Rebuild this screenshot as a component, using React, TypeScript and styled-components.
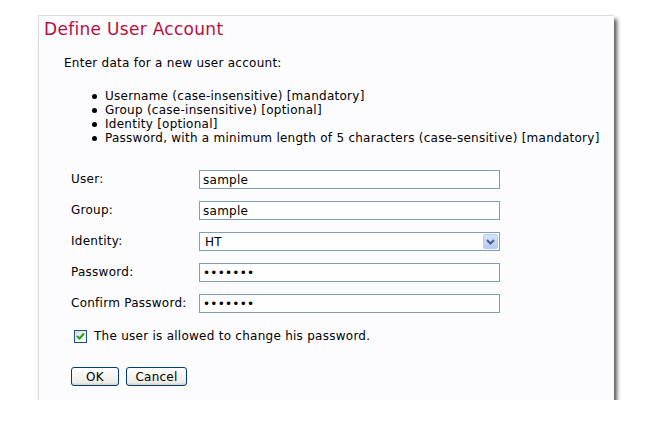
import React from "react";
import styled, { createGlobalStyle } from "styled-components";

const GlobalStyle = createGlobalStyle`
  body {
    margin: 0;
    background: #fff;
    font-family: "DejaVu Sans", Verdana, sans-serif;
  }
`;

const Page = styled.div`
  padding: 15px 0 0 38px;
`;

const Panel = styled.div`
  box-sizing: border-box;
  width: 576px;
  height: 385px;
  background: #fcfbfe;
  border-top: 1px solid #dcdcdc;
  border-left: 1px solid #dcdcdc;
  box-shadow: 3px 4px 4px rgba(0, 0, 0, 0.65);
  color: #000;
  font-size: 12px;
  letter-spacing: 0.26px;
`;

const Title = styled.h1`
  margin: 0;
  padding: 2px 0 0 5px;
  font-size: 17px;
  letter-spacing: 0.3px;
  line-height: 22px;
  font-weight: normal;
  color: #b5103c;
`;

const Intro = styled.p`
  margin: 16px 0 0 25px;
  line-height: 14px;
`;

const Bullets = styled.ul`
  list-style: none;
  margin: 19px 0 0 52px;
  padding: 0;
  line-height: 14px;
`;

const Bullet = styled.li`
  position: relative;
  padding-left: 14px;

  &::before {
    content: "";
    position: absolute;
    left: 1px;
    top: 5px;
    width: 5px;
    height: 5px;
    border-radius: 50%;
    background: #000;
  }
`;

const Form = styled.form`
  display: grid;
  grid-template-columns: 128px 301px;
  row-gap: 12px;
  align-items: center;
  margin: 25px 0 0 32px;
`;

const Label = styled.label`
  line-height: 19px;
`;

const TextInput = styled.input`
  box-sizing: border-box;
  width: 301px;
  height: 19px;
  margin: 0;
  padding: 0 3px;
  border: 1px solid #7f9db9;
  background: #fff;
  font-family: "DejaVu Sans", Verdana, sans-serif;
  font-size: 12px;
  letter-spacing: 0.26px;
  color: #000;
  caret-color: #000;
  outline: none;
`;

const SelectBox = styled.div`
  box-sizing: border-box;
  display: flex;
  align-items: center;
  justify-content: space-between;
  width: 301px;
  height: 19px;
  padding: 0 1px 0 5px;
  border: 1px solid #7f9db9;
  background: #fff;
`;

const SelectArrow = styled.span`
  box-sizing: border-box;
  display: flex;
  align-items: center;
  justify-content: center;
  width: 15px;
  height: 15px;
  border: 1px solid #b8cdf5;
  border-radius: 2px;
  background: linear-gradient(#d6e3fd, #b6cbf9);
`;

const CheckRow = styled.label`
  display: flex;
  align-items: center;
  gap: 7px;
  margin: 16px 0 0 35px;
`;

const CheckBox = styled.span`
  box-sizing: border-box;
  display: flex;
  align-items: center;
  justify-content: center;
  width: 13px;
  height: 13px;
  border: 1px solid #1c5180;
  background: linear-gradient(135deg, #dcdcd7, #fff);
`;

const Buttons = styled.div`
  display: flex;
  gap: 7px;
  margin: 24px 0 0 32px;
`;

const Button = styled.button<{ $w: number }>`
  box-sizing: border-box;
  width: ${(p) => p.$w}px;
  height: 19px;
  padding: 0;
  border: 1px solid #003c74;
  border-radius: 3px;
  background: linear-gradient(#ffffff, #ecebe6 85%, #d6d0c5);
  font-family: "DejaVu Sans", Verdana, sans-serif;
  font-size: 12px;
  letter-spacing: 0.26px;
  color: #000;
`;

const items = [
  "Username (case-insensitive) [mandatory]",
  "Group (case-insensitive) [optional]",
  "Identity [optional]",
  "Password, with a minimum length of 5 characters (case-sensitive) [mandatory]",
];

export default function App() {
  return (
    <Page>
      <GlobalStyle />
      <Panel>
        <Title>Define User Account</Title>
        <Intro>Enter data for a new user account:</Intro>
        <Bullets>
          {items.map((t) => (
            <Bullet key={t}>{t}</Bullet>
          ))}
        </Bullets>
        <Form onSubmit={(e) => e.preventDefault()}>
          <Label htmlFor="user">User:</Label>
          <TextInput id="user" defaultValue="sample" />
          <Label htmlFor="group">Group:</Label>
          <TextInput id="group" defaultValue="sample" />
          <Label>Identity:</Label>
          <SelectBox>
            <span>HT</span>
            <SelectArrow>
              <svg width="9" height="6" viewBox="0 0 9 6">
                <path d="M1 1 L4.5 4.5 L8 1" fill="none" stroke="#4d6185" strokeWidth="2" />
              </svg>
            </SelectArrow>
          </SelectBox>
          <Label htmlFor="pw">Password:</Label>
          <TextInput id="pw" type="password" defaultValue="sample1" />
          <Label htmlFor="pw2">Confirm Password:</Label>
          <TextInput id="pw2" type="password" defaultValue="sample1" autoFocus />
        </Form>
        <CheckRow>
          <CheckBox>
            <svg width="9" height="8" viewBox="0 0 9 8">
              <path d="M1 4 L3.5 6.5 L8 1.5" fill="none" stroke="#21a121" strokeWidth="2" />
            </svg>
          </CheckBox>
          The user is allowed to change his password.
        </CheckRow>
        <Buttons>
          <Button type="button" $w={48}>OK</Button>
          <Button type="button" $w={61}>Cancel</Button>
        </Buttons>
      </Panel>
    </Page>
  );
}
